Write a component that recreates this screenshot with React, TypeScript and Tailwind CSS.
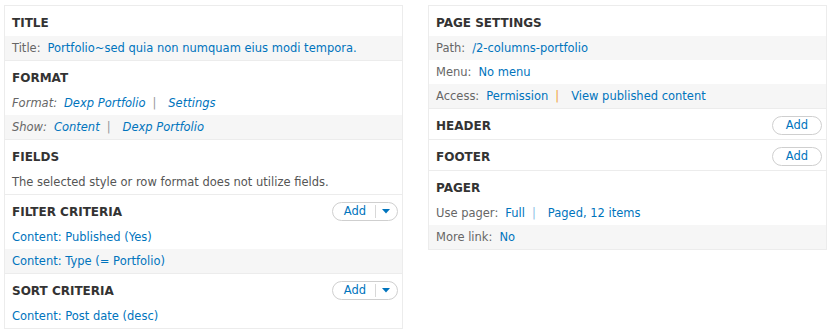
import React from "react";

type Part = { text: string; link?: boolean };
type Row = { label: string; parts: Part[]; gray?: boolean; italic?: boolean; sep?: string };
type Section = { title: string; add?: "plain" | "split"; rows: Row[] };

const left: Section[] = [
  {
    title: "TITLE",
    rows: [{ label: "Title:", parts: [{ text: "Portfolio~sed quia non numquam eius modi tempora.", link: true }], gray: true }],
  },
  {
    title: "FORMAT",
    rows: [
      { label: "Format:", italic: true, sep: "text-[#999]", parts: [{ text: "Dexp Portfolio", link: true }, { text: "Settings", link: true }] },
      { label: "Show:", italic: true, gray: true, sep: "text-[#999]", parts: [{ text: "Content", link: true }, { text: "Dexp Portfolio", link: true }] },
    ],
  },
  {
    title: "FIELDS",
    rows: [{ label: "", parts: [{ text: "The selected style or row format does not utilize fields." }] }],
  },
  {
    title: "FILTER CRITERIA",
    add: "split",
    rows: [
      { label: "", parts: [{ text: "Content: Published (Yes)", link: true }] },
      { label: "", gray: true, parts: [{ text: "Content: Type (= Portfolio)", link: true }] },
    ],
  },
  {
    title: "SORT CRITERIA",
    add: "split",
    rows: [{ label: "", parts: [{ text: "Content: Post date (desc)", link: true }] }],
  },
];

const right: Section[] = [
  {
    title: "PAGE SETTINGS",
    rows: [
      { label: "Path:", gray: true, parts: [{ text: "/2-columns-portfolio", link: true }] },
      { label: "Menu:", parts: [{ text: "No menu", link: true }] },
      { label: "Access:", gray: true, sep: "text-[#f0a040]", parts: [{ text: "Permission", link: true }, { text: "View published content", link: true }] },
    ],
  },
  { title: "HEADER", add: "plain", rows: [] },
  { title: "FOOTER", add: "plain", rows: [] },
  {
    title: "PAGER",
    rows: [
      { label: "Use pager:", sep: "text-[#8ec1e6]", parts: [{ text: "Full", link: true }, { text: "Paged, 12 items", link: true }] },
      { label: "More link:", gray: true, parts: [{ text: "No", link: true }] },
    ],
  },
];

const AddButton = ({ split }: { split: boolean }) => (
  <div className="mt-[2px] flex h-[19px] items-center rounded-full border border-[#cfcfcf] bg-white text-[11.5px] text-[#0074bd]">
    <span className={`pt-[1px] ${split ? "pl-[11px] pr-[9px]" : "px-[13px]"}`}>Add</span>
    {split && (
      <span className="flex h-[13px] items-center border-l border-[#d8d8d8] pl-[6px] pr-[7px]">
        <svg width="8" height="5" viewBox="0 0 8 5">
          <path d="M0 0h8L4 4.5z" fill="#0074bd" />
        </svg>
      </span>
    )}
  </div>
);

const RowLine = ({ row }: { row: Row }) => (
  <div
    className={`flex h-6 items-center pl-[7px] pt-[2px] text-[11.5px] ${row.gray ? "bg-[#f6f6f6]" : "bg-white"} ${row.italic ? "italic" : ""}`}
  >
    {row.label && <span className="mr-[7px] text-[#666]">{row.label}</span>}
    {row.parts.map((p, i) => (
      <React.Fragment key={i}>
        {i > 0 && <span className={`ml-[7px] mr-[12px] ${row.sep ?? "text-[#999]"}`}>|</span>}
        <span className={p.link ? "text-[#0074bd]" : "text-[#555]"}>{p.text}</span>
      </React.Fragment>
    ))}
  </div>
);

const Panel = ({ sections }: { sections: Section[] }) => (
  <div className="w-[399px] self-start border border-[#ececec] bg-white">
    {sections.map((s, i) => (
      <div key={s.title} className={i > 0 ? "border-t border-[#ececec]" : ""}>
        <div className="flex h-[30px] items-center justify-between pl-[7px] pr-[4px]">
          <span className="pt-[3px] text-[12px] font-bold text-[#333]">{s.title}</span>
          {s.add && <AddButton split={s.add === "split"} />}
        </div>
        {s.rows.map((r, j) => (
          <RowLine key={j} row={r} />
        ))}
      </div>
    ))}
  </div>
);

export default function App() {
  return (
    <div
      className="flex h-[333px] w-[833px] gap-[25px] bg-white pl-[4px] pt-[5px]"
      style={{ fontFamily: '"DejaVu Sans", Verdana, sans-serif' }}
    >
      <Panel sections={left} />
      <Panel sections={right} />
    </div>
  );
}
